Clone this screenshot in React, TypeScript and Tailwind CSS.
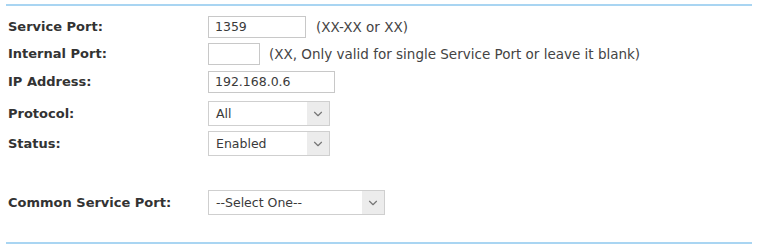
import { ChevronDown } from "lucide-react";

const font = { fontFamily: '"DejaVu Sans", Verdana, sans-serif' };

function Select({ value, width }: { value: string; width: string }) {
  return (
    <div className={`flex h-[25px] border border-[#cfcfcf] bg-white ${width}`}>
      <span className="flex-1 pl-[7px] leading-[23px] text-[12.5px] text-[#3a3a3a]">{value}</span>
      <span className="flex w-[22px] items-center justify-center bg-[#ececec]">
        <ChevronDown size={14} strokeWidth={2} className="text-[#777]" />
      </span>
    </div>
  );
}

function Row({ label, className, children }: { label: string; className?: string; children: React.ReactNode }) {
  return (
    <div className={`flex items-center ${className ?? ""}`}>
      <div className="w-[200px] text-[13px] font-bold text-[#333]">{label}</div>
      <div className="flex items-center">{children}</div>
    </div>
  );
}

export default function App() {
  return (
    <div className="h-[251px] w-[764px] bg-white px-[6px] pt-[4px]" style={font}>
      <div className="h-[2px] w-[746px] bg-[#a9d5f2]" />
      <div className="px-[2px] pt-[10px]">
        <Row label="Service Port:" className="h-[22px]">
          <div className="h-[22px] w-[98px] border border-[#c8c8c8] pl-[6px] text-[12.5px] leading-[20px] text-[#3a3a3a]">1359</div>
          <span className="ml-[10px] text-[13.5px] text-[#444]">(XX-XX or XX)</span>
        </Row>
        <Row label="Internal Port:" className="mt-[5px] h-[22px]">
          <div className="h-[22px] w-[52px] border border-[#c8c8c8]" />
          <span className="ml-[9px] text-[13.5px] text-[#444]">(XX, Only valid for single Service Port or leave it blank)</span>
        </Row>
        <Row label="IP Address:" className="mt-[6px] h-[22px]">
          <div className="h-[22px] w-[127px] border border-[#c8c8c8] pl-[6px] text-[12.5px] leading-[20px] text-[#3a3a3a]">192.168.0.6</div>
        </Row>
        <Row label="Protocol:" className="mt-[8px] h-[25px]">
          <Select value="All" width="w-[122px]" />
        </Row>
        <Row label="Status:" className="mt-[5px] h-[25px]">
          <Select value="Enabled" width="w-[122px]" />
        </Row>
        <Row label="Common Service Port:" className="mt-[34px] h-[25px]">
          <Select value="--Select One--" width="w-[177px]" />
        </Row>
      </div>
      <div className="mt-[27px] h-[2px] w-[746px] bg-[#a9d5f2]" />
    </div>
  );
}
